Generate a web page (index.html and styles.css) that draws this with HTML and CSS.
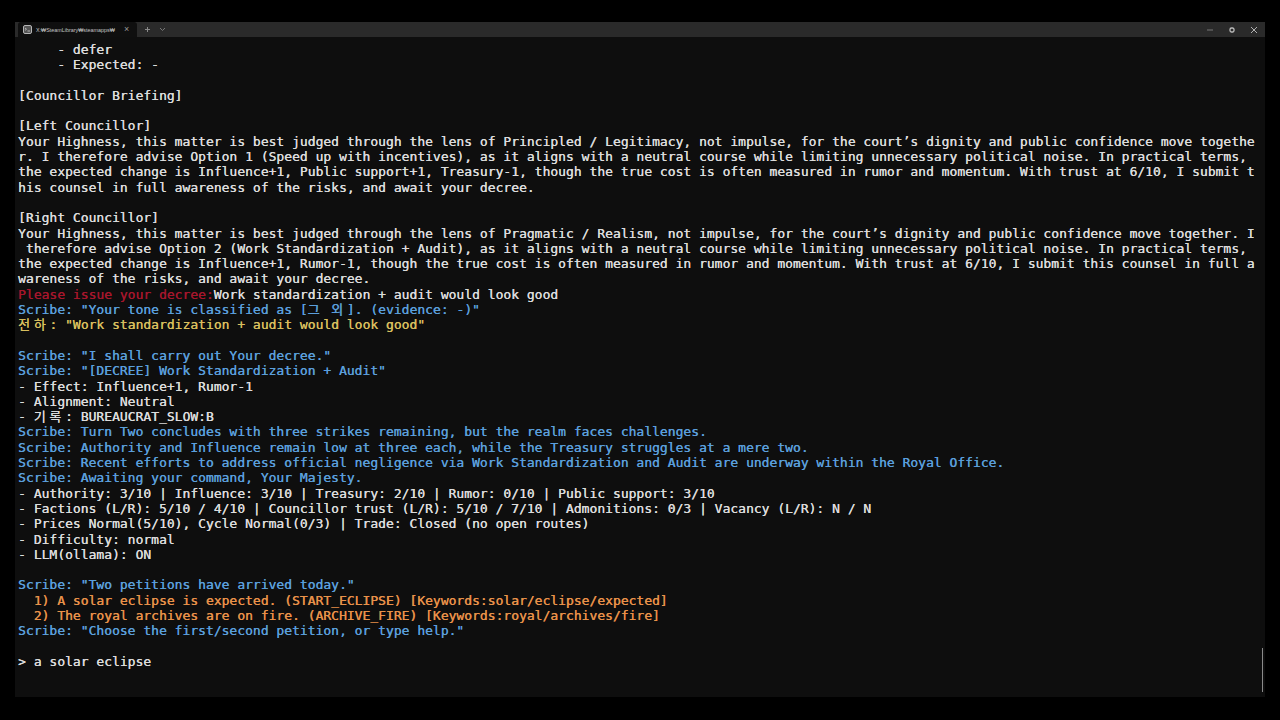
FILE: index.html
```html
<!DOCTYPE html>
<html lang="en">
<head>
<meta charset="utf-8">
<title>Terminal</title>
<link rel="stylesheet" href="styles.css">
</head>
<body>
<div class="window">
<header class="titlebar">
<div class="tab">
<svg class="tab-icon" width="9" height="9" viewBox="0 0 9 9"><rect x="0.5" y="0.5" width="8" height="8" rx="1.5" fill="#555" stroke="#b5b5b5"/><path d="M2 3l1.5 1.2L2 5.4M4.5 6h2.5" stroke="#ccc" stroke-width="0.8" fill="none"/></svg>
<span class="tab-title">X:₩SteamLibrary₩steamapps₩</span>
<span class="tab-close">×</span>
</div>
<div class="tab-actions">
<svg width="7" height="7" viewBox="0 0 7 7"><path d="M3.5 1v5M1 3.5h5" stroke="#8a8a8a"/></svg>
<svg width="7" height="5" viewBox="0 0 7 5"><path d="M1 1l2.5 2.5L6 1" stroke="#777" fill="none"/></svg>
</div>
<div class="window-controls">
<svg width="8" height="8" viewBox="0 0 8 8"><path d="M1 4h6" stroke="#777"/></svg>
<svg width="8" height="8" viewBox="0 0 8 8"><rect x="2" y="2" width="4" height="4" rx="1.5" fill="none" stroke="#bdbdbd" stroke-width="1.3"/></svg>
<svg width="8" height="8" viewBox="0 0 8 8"><path d="M1 1l6 6M7 1L1 7" stroke="#b0b0b0"/></svg>
</div>
</header>
<main class="console">
<div class="line">     - defer</div>
<div class="line">     - Expected: -</div>
<div class="line"> </div>
<div class="line">[Councillor Briefing]</div>
<div class="line"> </div>
<div class="line">[Left Councillor]</div>
<div class="line">Your Highness, this matter is best judged through the lens of Principled / Legitimacy, not impulse, for the court’s dignity and public confidence move togethe</div>
<div class="line">r. I therefore advise Option 1 (Speed up with incentives), as it aligns with a neutral course while limiting unnecessary political noise. In practical terms,</div>
<div class="line">the expected change is Influence+1, Public support+1, Treasury-1, though the true cost is often measured in rumor and momentum. With trust at 6/10, I submit t</div>
<div class="line">his counsel in full awareness of the risks, and await your decree.</div>
<div class="line"> </div>
<div class="line">[Right Councillor]</div>
<div class="line">Your Highness, this matter is best judged through the lens of Pragmatic / Realism, not impulse, for the court’s dignity and public confidence move together. I</div>
<div class="line"> therefore advise Option 2 (Work Standardization + Audit), as it aligns with a neutral course while limiting unnecessary political noise. In practical terms,</div>
<div class="line">the expected change is Influence+1, Rumor-1, though the true cost is often measured in rumor and momentum. With trust at 6/10, I submit this counsel in full a</div>
<div class="line">wareness of the risks, and await your decree.</div>
<div class="line"><span class="red">Please issue your decree:</span>Work standardization + audit would look good</div>
<div class="line blue">Scribe: "Your tone is classified as [<span class="ko">그</span> <span class="ko">외</span>]. (evidence: -)"</div>
<div class="line yellow"><span class="ko">전하</span>: "Work standardization + audit would look good"</div>
<div class="line"> </div>
<div class="line blue">Scribe: "I shall carry out Your decree."</div>
<div class="line blue">Scribe: "[DECREE] Work Standardization + Audit"</div>
<div class="line">- Effect: Influence+1, Rumor-1</div>
<div class="line">- Alignment: Neutral</div>
<div class="line">- <span class="ko">기록</span>: BUREAUCRAT_SLOW:B</div>
<div class="line blue">Scribe: Turn Two concludes with three strikes remaining, but the realm faces challenges.</div>
<div class="line blue">Scribe: Authority and Influence remain low at three each, while the Treasury struggles at a mere two.</div>
<div class="line blue">Scribe: Recent efforts to address official negligence via Work Standardization and Audit are underway within the Royal Office.</div>
<div class="line blue">Scribe: Awaiting your command, Your Majesty.</div>
<div class="line">- Authority: 3/10 | Influence: 3/10 | Treasury: 2/10 | Rumor: 0/10 | Public support: 3/10</div>
<div class="line">- Factions (L/R): 5/10 / 4/10 | Councillor trust (L/R): 5/10 / 7/10 | Admonitions: 0/3 | Vacancy (L/R): N / N</div>
<div class="line">- Prices Normal(5/10), Cycle Normal(0/3) | Trade: Closed (no open routes)</div>
<div class="line">- Difficulty: normal</div>
<div class="line">- LLM(ollama): ON</div>
<div class="line"> </div>
<div class="line blue">Scribe: "Two petitions have arrived today."</div>
<div class="line orange">  1) A solar eclipse is expected. (START_ECLIPSE) [Keywords:solar/eclipse/expected]</div>
<div class="line orange">  2) The royal archives are on fire. (ARCHIVE_FIRE) [Keywords:royal/archives/fire]</div>
<div class="line blue">Scribe: "Choose the first/second petition, or type help."</div>
<div class="line"> </div>
<div class="line">&gt; a solar eclipse</div>
</main>
<div class="scrollbar"></div>
</div>
</body>
</html>
```
FILE: styles.css
```css
html, body {
  margin: 0;
  height: 100%;
  background: #000;
}
body {
  padding: 22px 15px 23px;
  box-sizing: border-box;
  height: 720px;
  overflow: hidden;
}
.window {
  position: relative;
  height: 100%;
  background: #0e0e0e;
  display: flex;
  flex-direction: column;
}
.titlebar {
  flex: 0 0 15px;
  display: flex;
  align-items: center;
  background: #2a2a2a;
  font-family: "Liberation Sans", sans-serif;
}
.tab {
  width: 119px;
  margin-left: 3px;
  height: 100%;
  background: #0f0f0f;
  border-radius: 3px 3px 0 0;
  display: flex;
  align-items: center;
  gap: 4px;
  padding-left: 5px;
  box-sizing: border-box;
}
.tab-title {
  font-size: 5.4px;
  color: #c4c4c4;
  white-space: nowrap;
  width: 80px;
}
.tab-close {
  font-size: 9px;
  color: #999;
  margin-left: 4px;
  line-height: 1;
}
.tab-actions {
  display: flex;
  align-items: center;
  gap: 8px;
  margin-left: 7px;
}
.window-controls {
  margin-left: auto;
  margin-right: 7px;
  display: flex;
  align-items: center;
  gap: 14px;
}
.console {
  padding: 5px 0 0 3px;
  font-family: "DejaVu Sans Mono", monospace;
  font-size: 13px;
  color: #dcdcdc;
  text-shadow: 0.3px 0 0 currentColor;
}
.line {
  height: 15.3px;
  line-height: 15.3px;
  white-space: pre;
}
.red { color: #a5162c; }
.blue { color: #5b9fdb; }
.yellow { color: #d8bf5e; }
.orange { color: #e8924a; }
.ko {
  font-family: "Noto Sans CJK KR", sans-serif;
  letter-spacing: 3.7px;
  line-height: 0;
}
.scrollbar {
  position: absolute;
  right: 2px;
  top: 626px;
  width: 1px;
  height: 44px;
  background: #8a8a8a;
}
```
